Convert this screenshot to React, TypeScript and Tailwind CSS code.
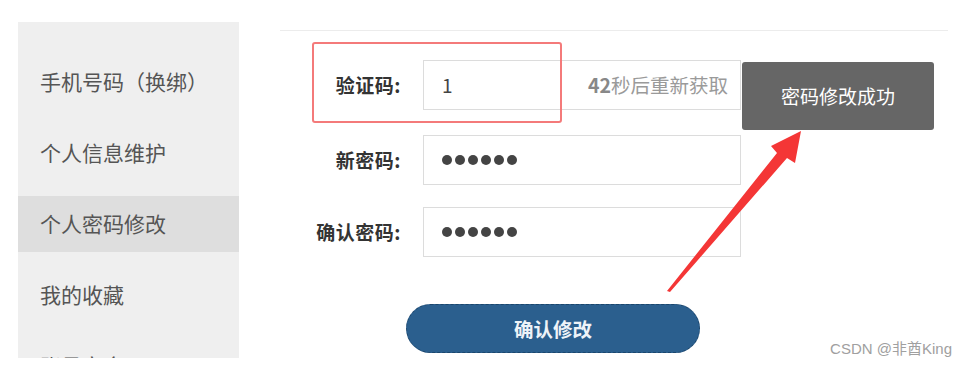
import React from 'react';

const MENU = ['手机号码（换绑）', '个人信息维护', '个人密码修改', '我的收藏', '账号安全'];

const FONT = "font-['Microsoft_YaHei','Noto_Sans_CJK_SC',sans-serif]";

const Row: React.FC<{ label: string; children: React.ReactNode; className?: string }> = ({ label, children, className }) => (
  <div className={`flex items-center h-[50px] ${className ?? ''}`}>
    <div className="w-[122px] pr-[1px] text-right text-[19px] font-bold text-[#333] tracking-[0.5px]">{label}</div>
    <div className="ml-[21px] w-[318px] h-full border border-[#dcdcdc] bg-white flex items-center px-[18px]">
      {children}
    </div>
  </div>
);

const Dots = () => (
  <div className="flex gap-[3px]">
    {[0, 1, 2, 3, 4, 5].map((i) => (
      <span key={i} className="w-[10px] h-[10px] rounded-full bg-[#444]" />
    ))}
  </div>
);

export default function App() {
  return (
    <div className={`relative w-[968px] h-[368px] bg-white overflow-hidden flex ${FONT}`}>
      {/* sidebar */}
      <div className="ml-[18px] mt-[22px] w-[221px] h-[336px] bg-[#efefef] overflow-hidden pt-[32px] flex flex-col gap-[15px] shrink-0">
        {MENU.map((m, i) => (
          <div
            key={m}
            className={`h-[56px] shrink-0 flex items-center pl-[22px] text-[21px] text-[#555] ${i === 2 ? 'bg-[#dedede]' : ''}`}
          >
            {m}
          </div>
        ))}
      </div>

      {/* main */}
      <div className="ml-[41px] w-[668px] pt-[30px]">
        <div className="h-px bg-[#ececec]" />
        <div className="mt-[29px] flex flex-col">
          <Row label="验证码:">
            <span className="text-[19px] text-[#444]">1</span>
            <span className="ml-auto text-[19.5px] text-[#9a9a9a] -mr-[6px]">
              <b className="text-[#888]">42</b>秒后重新获取
            </span>
          </Row>
          <Row label="新密码:" className="mt-[25px]">
            <Dots />
          </Row>
          <Row label="确认密码:" className="mt-[22px]">
            <Dots />
          </Row>
          <button className="mt-[47px] ml-[126px] w-[294px] h-[49px] rounded-full bg-[#2b5f8e] border border-dashed border-[#1c466c] text-[#eef3f8] text-[19.5px] font-bold">
            确认修改
          </button>
        </div>
      </div>

      {/* red highlight */}
      <div className="absolute left-[312px] top-[42px] w-[250px] h-[81px] border-2 border-[#f47a7a] rounded-[3px]" />

      {/* toast */}
      <div className="absolute left-[742px] top-[62px] w-[192px] h-[68px] rounded-[3px] bg-[#666] text-white text-[19px] flex items-center justify-center">
        密码修改成功
      </div>

      {/* arrow */}
      <svg className="absolute left-0 top-0 pointer-events-none" width="968" height="368" viewBox="0 0 968 368">
        <polygon
          points="667,291 777,153 771,146 801,131 795,163 787,158 670,292"
          fill="#f43636"
        />
      </svg>

      <div className="absolute right-[16px] bottom-[8px] text-[15px] text-[#a0a0a0] font-['Liberation_Sans','Noto_Sans_CJK_SC',sans-serif]">
        CSDN @非酋King
      </div>
    </div>
  );
}
